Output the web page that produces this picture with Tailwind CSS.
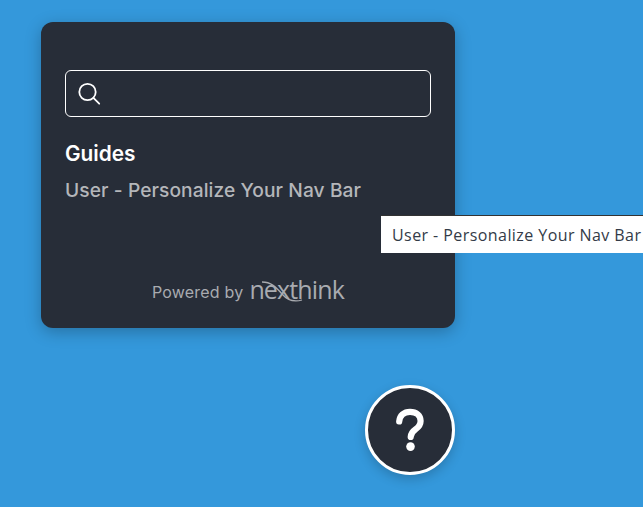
<!DOCTYPE html>
<html lang="en">

<head>
    <meta charset="UTF-8">
    <meta name="viewport" content="width=device-width, initial-scale=1.0">
    <title>Guides</title>
    <script src="https://cdn.jsdelivr.net/npm/@tailwindcss/browser@4"></script>
</head>

<body class="relative h-[507px] w-[643px] overflow-hidden bg-[#3498db] font-['Inter',sans-serif]">
    <!-- guides panel -->
    <div class="absolute left-[41px] top-[22px] flex h-[306px] w-[414px] flex-col rounded-xl bg-[#272d38] px-6 pt-12 shadow-[0_4px_16px_rgba(0,0,0,0.25)]">
        <div class="flex h-[47px] w-[366px] items-start rounded-md border border-white pl-[11px] pt-[11px]">
            <svg class="h-[24px] w-[24px]" viewBox="0 0 24 24" fill="none" stroke="white" stroke-width="1.8" stroke-linecap="round">
                <circle cx="10.5" cy="10" r="8.2" />
                <path d="M16.4 15.9l5.8 5.8" />
            </svg>
        </div>
        <h2 class="mt-[23px] text-[20.8px] leading-[28px] font-semibold text-white">Guides</h2>
        <p class="mt-[9px] text-[19.2px] leading-[26px] font-medium tracking-[0.08px] text-[#b4b6ba]">User - Personalize Your Nav Bar</p>

        <div class="mt-auto mb-[26px] flex items-end justify-center text-[#a9abb0]">
            <span class="text-[16px] leading-[20px] tracking-[0.2px]">Powered by</span>
            <span class="relative ml-[6px] font-['Open_Sans',sans-serif] text-[25px] leading-[26px] tracking-[-0.85px]">nexthink
                <svg class="absolute left-[12px] top-[4px] h-[24px] w-[46px]" viewBox="0 0 46 24" fill="none" stroke="#a9abb0" stroke-width="1.3">
                    <path d="M1 2c9 0 14 5 20 12s13 8 20 6" />
                </svg>
            </span>
        </div>
    </div>

    <!-- tooltip -->
    <div class="absolute left-[381px] top-[215px] flex h-[38px] w-[280px] items-center border-t border-[#333] bg-white pl-[11px] font-['Open_Sans',sans-serif] text-[16px] tracking-[0.43px] whitespace-nowrap text-[#333b47]">
        User - Personalize Your Nav Bar
    </div>

    <!-- help button -->
    <button class="absolute left-[365px] top-[385px] flex h-[90px] w-[90px] items-center justify-center rounded-full border-[3px] border-white bg-[#272d38] shadow-[0_4px_12px_rgba(0,0,0,0.2)]">
        <svg class="h-[44px] w-[30px]" viewBox="0 0 30 44" fill="none">
            <path d="M4.2 13.5C4.7 7.5 9 3.8 15 3.8c6.3 0 10.6 3.7 10.6 9.2 0 4.2-2.2 6.3-5 8.3-3 2.1-4.9 3.6-4.9 7.7" stroke="white" stroke-width="6.2" stroke-linecap="round" />
            <circle cx="15.5" cy="38.6" r="4.3" fill="white" />
        </svg>
    </button>
</body>

</html>
